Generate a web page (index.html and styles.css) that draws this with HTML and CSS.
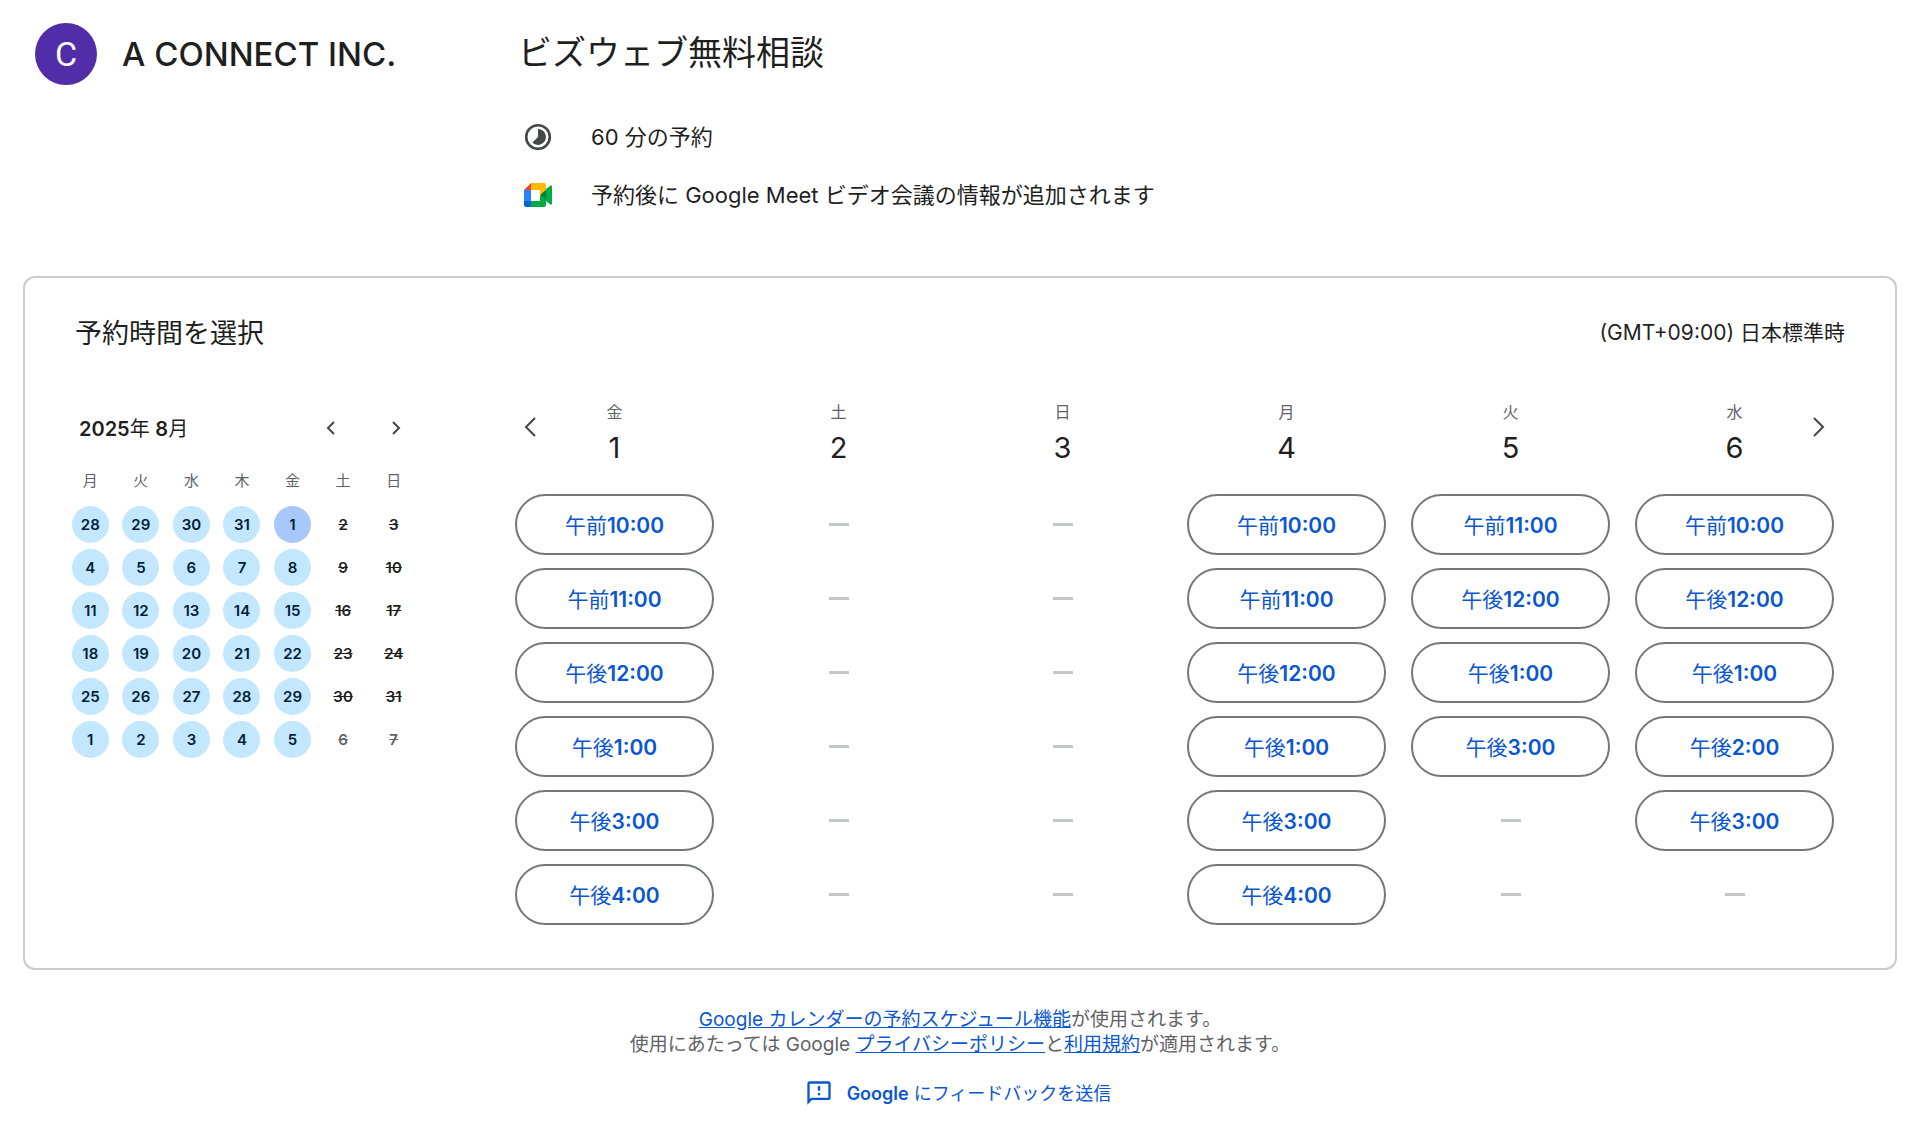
FILE: index.html
```html
<!DOCTYPE html>
<html lang="ja">
<head>
    <meta charset="UTF-8">
    <meta name="viewport" content="width=device-width, initial-scale=1.0">
    <title>ビズウェブ無料相談</title>
    <link rel="stylesheet" href="styles.css">
</head>
<body>

    <header class="header">
        <div class="owner">
            <span class="avatar">C</span>
            <span class="owner-name">A CONNECT INC.</span>
        </div>
        <div class="info">
            <h1>ビズウェブ無料相談</h1>
            <div class="info-row">
                <svg class="info-icon" viewBox="0 0 24 24" fill="#444746"><path d="M12 1.500a10.500 10.500 0 1 0 0 21 10.500 10.500 0 0 0 0-21zm0 18.900a8.400 8.400 0 1 1 0-16.800 8.400 8.400 0 0 1 0 16.800z"/><path d="M12 5.700V12l-4.450 4.450A6.300 6.300 0 1 0 12 5.700z"/></svg>
                <span>60 分の予約</span>
            </div>
            <div class="info-row">
                <svg class="info-icon" viewBox="0 0 30 30">
                    <path fill="#00832d" d="M17 15l3 4 5 3 1-7-1-7-5 3z"/>
                    <path fill="#0066da" d="M1 21v4a2 2 0 0 0 2 2h5l1-3-1-3-4-1z"/>
                    <path fill="#e94235" d="M8 3L1 10l4 1 3-1 1-3z"/>
                    <path fill="#2684fc" d="M1 10h7v11H1z"/>
                    <path fill="#00ac47" d="M27.500 5.500L23 9v12l4.500 3.500c.7.500 1.500.100 1.500-.700V6.200c0-.800-.800-1.200-1.500-.700zM17 15v6H8v6h13a2 2 0 0 0 2-2v-5z"/>
                    <path fill="#ffba00" d="M21 3H8v7h9v5l6-5V5a2 2 0 0 0-2-2z"/>
                </svg>
                <span>予約後に Google Meet ビデオ会議の情報が追加されます</span>
            </div>
        </div>
    </header>

    <main class="card">
        <div class="card-head">
            <h2>予約時間を選択</h2>
            <span class="timezone">(GMT+09:00) 日本標準時</span>
        </div>

        <div class="card-body">
            <section class="calendar">
                <div class="month">
                    <span class="month-name"><b>2025</b>年 <b>8</b>月</span>
                    <button class="nav" aria-label="前の月"><svg width="20" height="20" viewBox="0 0 20 20"><path d="M13 4l-6 6 6 6"/></svg></button>
                    <button class="nav" aria-label="次の月"><svg width="20" height="20" viewBox="0 0 20 20"><path d="M7 4l6 6-6 6"/></svg></button>
                </div>
                <table class="dates">
                    <thead>
                        <tr><th>月</th><th>火</th><th>水</th><th>木</th><th>金</th><th>土</th><th>日</th></tr>
                    </thead>
                    <tbody>
                        <tr><td><button>28</button></td><td><button>29</button></td><td><button>30</button></td><td><button>31</button></td><td><button class="selected">1</button></td><td><s>2</s></td><td><s>3</s></td></tr>
                        <tr><td><button>4</button></td><td><button>5</button></td><td><button>6</button></td><td><button>7</button></td><td><button>8</button></td><td><s>9</s></td><td><s>10</s></td></tr>
                        <tr><td><button>11</button></td><td><button>12</button></td><td><button>13</button></td><td><button>14</button></td><td><button>15</button></td><td><s>16</s></td><td><s>17</s></td></tr>
                        <tr><td><button>18</button></td><td><button>19</button></td><td><button>20</button></td><td><button>21</button></td><td><button>22</button></td><td><s>23</s></td><td><s>24</s></td></tr>
                        <tr><td><button>25</button></td><td><button>26</button></td><td><button>27</button></td><td><button>28</button></td><td><button>29</button></td><td><s>30</s></td><td><s>31</s></td></tr>
                        <tr><td><button>1</button></td><td><button>2</button></td><td><button>3</button></td><td><button>4</button></td><td><button>5</button></td><td><s class="other">6</s></td><td><s class="other">7</s></td></tr>
                    </tbody>
                </table>
            </section>

            <section class="week">
                <div class="days">
                    <div class="day">
                        <div class="day-head"><span>金</span><strong>1</strong></div>
                        <button class="slot">午前<b>10:00</b></button>
                        <button class="slot">午前<b>11:00</b></button>
                        <button class="slot">午後<b>12:00</b></button>
                        <button class="slot">午後<b>1:00</b></button>
                        <button class="slot">午後<b>3:00</b></button>
                        <button class="slot">午後<b>4:00</b></button>
                    </div>
                    <div class="day">
                        <div class="day-head"><span>土</span><strong>2</strong></div>
                        <div class="none"></div>
                        <div class="none"></div>
                        <div class="none"></div>
                        <div class="none"></div>
                        <div class="none"></div>
                        <div class="none"></div>
                    </div>
                    <div class="day">
                        <div class="day-head"><span>日</span><strong>3</strong></div>
                        <div class="none"></div>
                        <div class="none"></div>
                        <div class="none"></div>
                        <div class="none"></div>
                        <div class="none"></div>
                        <div class="none"></div>
                    </div>
                    <div class="day">
                        <div class="day-head"><span>月</span><strong>4</strong></div>
                        <button class="slot">午前<b>10:00</b></button>
                        <button class="slot">午前<b>11:00</b></button>
                        <button class="slot">午後<b>12:00</b></button>
                        <button class="slot">午後<b>1:00</b></button>
                        <button class="slot">午後<b>3:00</b></button>
                        <button class="slot">午後<b>4:00</b></button>
                    </div>
                    <div class="day">
                        <div class="day-head"><span>火</span><strong>5</strong></div>
                        <button class="slot">午前<b>11:00</b></button>
                        <button class="slot">午後<b>12:00</b></button>
                        <button class="slot">午後<b>1:00</b></button>
                        <button class="slot">午後<b>3:00</b></button>
                        <div class="none"></div>
                        <div class="none"></div>
                    </div>
                    <div class="day">
                        <div class="day-head"><span>水</span><strong>6</strong></div>
                        <button class="slot">午前<b>10:00</b></button>
                        <button class="slot">午後<b>12:00</b></button>
                        <button class="slot">午後<b>1:00</b></button>
                        <button class="slot">午後<b>2:00</b></button>
                        <button class="slot">午後<b>3:00</b></button>
                        <div class="none"></div>
                    </div>
                </div>
                <button class="nav week-prev" aria-label="前へ"><svg width="30" height="30" viewBox="0 0 30 30"><path d="M20 6l-9 9 9 9"/></svg></button>
                <button class="nav week-next" aria-label="次へ"><svg width="30" height="30" viewBox="0 0 30 30"><path d="M10 6l9 9-9 9"/></svg></button>
            </section>
        </div>
    </main>

    <footer class="footer">
        <p><a href="#">Google カレンダーの予約スケジュール機能</a>が使用されます。<br>使用にあたっては Google <a href="#">プライバシーポリシー</a>と<a href="#">利用規約</a>が適用されます。</p>
        <a class="feedback" href="#">
            <svg width="28" height="28" viewBox="0 0 24 24" fill="#0b57d0"><path d="M20 2H4a2 2 0 0 0-2 2v18l4-4h14a2 2 0 0 0 2-2V4a2 2 0 0 0-2-2zm0 14H5.200L4 17.200V4h16v12zM11 12h2v2h-2zm0-6h2v4h-2z"/></svg>
            <span><b>Google</b> にフィードバックを送信</span>
        </a>
    </footer>

</body>
</html>
```
FILE: styles.css
```css
* { box-sizing: border-box; }
body { margin: 0; padding: 23px 23px 14px; background-color: #fff; color: #1f1f1f; font-family: Inter, "Noto Sans CJK JP", sans-serif; font-size: 21px; }
h1, h2, p { margin: 0; font-weight: 400; }
b { font-weight: 600; }
button { margin: 0; padding: 0; border: 0; background: none; font: inherit; color: inherit; cursor: pointer; }
svg { display: block; }

/* header */
.header { display: grid; grid-template-columns: 483px 1fr; height: 253px; padding-left: 12px; }
.owner { display: flex; align-items: center; gap: 25px; height: 62px; }
.avatar { width: 62px; height: 62px; border-radius: 50%; background-color: #512da8; color: #fff; font-family: Roboto, sans-serif; font-size: 34px; line-height: 62px; text-align: center; }
.owner-name { font-size: 33px; font-weight: 500; line-height: 62px; }
h1 { height: 62px; margin-bottom: 23px; font-size: 34px; line-height: 60px; }
.info-row { display: flex; align-items: center; gap: 38px; height: 58px; padding-left: 5px; font-size: 22px; }
.info-row span { padding-bottom: 4px; }
.info-icon { width: 30px; height: 30px; }

/* card */
.card { border: 2px solid #ccc; border-radius: 12px; padding: 32px 48px 43px 40px; }
.card-head { display: flex; align-items: center; justify-content: space-between; height: 42px; padding: 0 2px 0 10px; }
h2 { font-size: 27px; }
.card-body { display: grid; grid-template-columns: 354px 1fr; gap: 96px; padding: 43px 13px 0 0; }

/* month calendar */
.month { display: flex; align-items: center; gap: 25px; height: 66px; padding: 0 3px 0 14px; }
.month-name { flex: 1; padding-bottom: 2px; font-size: 20px; }
.nav svg { fill: none; stroke: #444746; stroke-width: 3; }
.month .nav { display: grid; place-items: center; width: 40px; height: 40px; }
.month .nav svg { stroke-width: 2; }
.dates { width: 100%; table-layout: fixed; border-collapse: collapse; font-size: 15px; font-weight: 600; text-align: center; }
.dates th { height: 42px; padding: 0 0 5px; color: #5f6368; font-weight: 400; }
.dates td { height: 43px; padding: 0; }
.dates button { width: 37px; height: 37px; border-radius: 50%; background-color: #c2e7ff; color: #001d35; }
.dates .selected { background-color: #a8c7fa; }
.other { color: #5f6368; }

/* time slots, the arrows share the grid cell of the days */
.week { display: grid; }
.week > * { grid-area: 1 / 1; }
.days { display: grid; grid-template-columns: repeat(6, 1fr); gap: 25px; }
.day { display: grid; grid-template-rows: 86px; grid-auto-rows: 61px; row-gap: 13px; }
.day-head { display: flex; flex-direction: column; align-items: center; padding-top: 6px; }
.day-head span { color: #5f6368; font-size: 16px; line-height: 22px; }
.day-head strong { font-size: 29px; font-weight: 400; line-height: 50px; }
.week .nav { align-self: start; margin-top: 17px; }
.week .nav svg { stroke-width: 2; }
.week-prev { justify-self: start; }
.week-next { justify-self: end; }
.slot { padding-bottom: 2px; border: 2px solid #747775; border-radius: 31px; color: #0b57d0; }
.none { place-self: center; width: 20px; height: 3px; background-color: #c4c7c5; }

/* footer */
.footer { display: flex; flex-direction: column; align-items: center; gap: 22px; padding-top: 37px; color: #5f6368; font-size: 19px; line-height: 25px; text-align: center; }
.footer a { color: #0b57d0; }
.footer .feedback { display: flex; align-items: center; gap: 14px; padding-right: 4px; font-size: 18px; text-decoration: none; }
```
